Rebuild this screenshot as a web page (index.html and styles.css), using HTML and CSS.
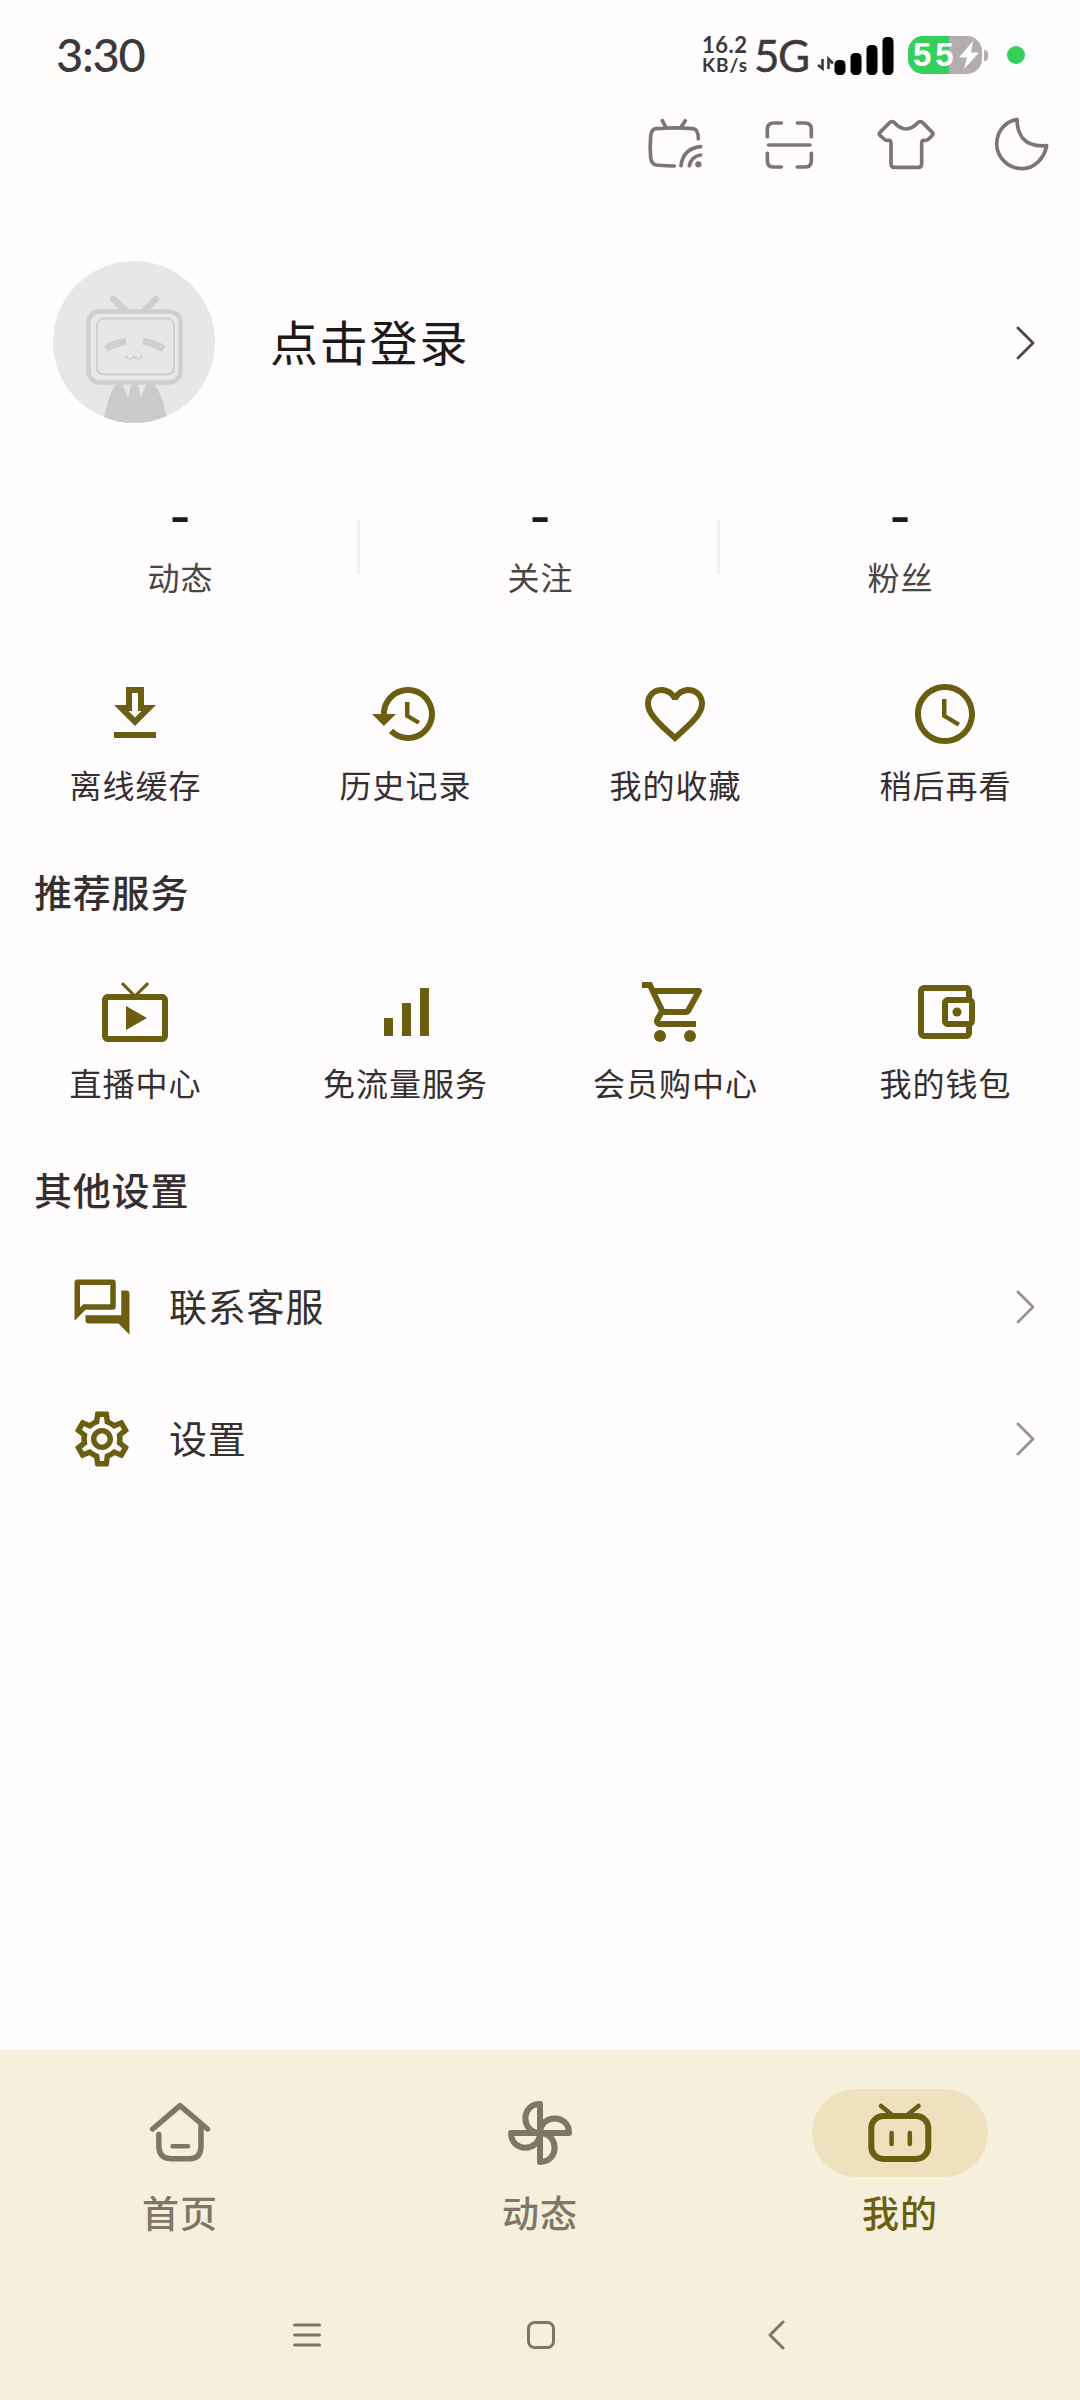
FILE: index.html
```html
<!DOCTYPE html>
<html lang="zh-CN">
<head>
<meta charset="utf-8">
<title>我的</title>
<link rel="stylesheet" href="styles.css">
</head>
<body>
<div class="screen">
  <header class="status">
    <span class="time">3:30</span>
    <div class="status-right">
      <div class="speed"><span class="speed-num">16.2</span><span class="speed-unit">KB/s</span></div>
      <span class="net">5G</span>
      <svg class="signal" width="78" height="40" viewBox="0 0 78 40">
        <g stroke="#3d393b" stroke-width="2.6" fill="none"><path d="M5.500 22V31.500L1 28M11.500 32V22L16 26.500"/></g>
        <rect x="17.500" y="23" width="11" height="15" rx="4.500"/>
        <rect x="33.500" y="16" width="11" height="22" rx="4.500"/>
        <rect x="49.500" y="8" width="11" height="30" rx="4.500"/>
        <rect x="65.500" y="0" width="11" height="38" rx="4.500"/>
      </svg>
      <div class="battery">
        <span class="battery-num">55</span>
        <svg width="20" height="28" viewBox="0 0 20 28"><path d="M14 0 0 16.500h8L5 28 20 11.500h-8z" fill="#fff"/></svg>
      </div>
      <span class="nub"></span>
      <span class="dot"></span>
    </div>
  </header>

  <div class="toolbar">
    <svg viewBox="0 0 180 180"><path d="M160 72Q160 44 145 41Q90 36 30 41Q18 45 17 65Q14 95 17 128Q20 148 34 150Q60 153 88 153M52 17L62 36M121 17L108 36M108 152Q115 100 167 95M133 152Q138 125 167 120"/><circle class="solid" cx="160" cy="148" r="9.500"/></svg>
    <svg viewBox="0 0 180 180"><path d="M22 65V43Q22 24 42 24H64M112 24H134Q154 24 154 43V65M22 115V137Q22 156 42 156H64M112 156H134Q154 156 154 137V115M26 90H150"/></svg>
    <svg viewBox="0 0 180 180"><path d="M54 22Q90 62 127 22Q134 17 140 23L169 52Q173 57 169 61L158 72Q152 78 144 76Q137 75 137 84V146Q137 157 126 157H56Q45 157 45 146V84Q45 75 38 76Q30 78 24 72L12 61Q8 57 12 52L41 23Q47 17 54 22Z"/></svg>
    <svg viewBox="0 0 180 180"><path d="M78 13Q78 45 93 67Q115 96 167 92C160 130 130 161 94 161A77 76 0 0 1 17 88C17 52 40 20 78 13Z"/></svg>
  </div>

  <section class="profile">
    <svg class="avatar" viewBox="0 0 162 162">
      <g fill="none" stroke="#cfcfcf" stroke-linecap="round" stroke-linejoin="round">
        <path fill="#cbcbcb" stroke="none" d="M51 162L51 156Q56 132 64 122H69L75 137L78.500 122H85L87.500 137L94 122H100Q109 132 113.600 156V162Z"/>
        <path stroke-width="6.500" d="M60 38L72 49M103 38L92 49"/>
        <rect x="35.500" y="50.500" width="92" height="71" rx="11" fill="#e7e7e7" stroke-width="4.500"/>
        <rect x="44" y="57.500" width="77" height="56" rx="7" stroke-width="2"/>
        <path stroke-width="7" stroke-linecap="butt" d="M53 88Q61 82 73 80.500M90 80.500Q102 82 111 88"/>
        <path stroke-width="1.700" d="M73 95Q77 101 81 95Q85 101 89 95"/>
      </g>
    </svg>
    <span class="name">点击登录</span>
    <svg class="chev dark" viewBox="0 0 20 36"><path d="M3 3L18 18L3 33"/></svg>
  </section>

  <section class="stats">
    <div class="stat"><b>-</b><span>动态</span></div>
    <div class="stat"><b>-</b><span>关注</span></div>
    <div class="stat"><b>-</b><span>粉丝</span></div>
  </section>

  <section class="grid">
    <div class="cell"><svg viewBox="0 0 24 24"><path d="M19 9h-4V3H9v6H5l7 7 7-7zm-8 2V5h2v6h1.170L12 13.170 9.830 11H11zm-6 7h14v2H5z"/></svg><span>离线缓存</span></div>
    <div class="cell"><svg viewBox="0 0 24 24"><path d="M13 3c-4.970 0-9 4.030-9 9H1l3.890 3.890.070.140L9 12H6c0-3.870 3.130-7 7-7s7 3.130 7 7-3.130 7-7 7c-1.930 0-3.680-.79-4.940-2.060l-1.420 1.420C8.270 19.990 10.510 21 13 21c4.970 0 9-4.030 9-9s-4.030-9-9-9zm-1 5v5l4.280 2.540.72-1.210-3.500-2.080V8H12z"/></svg><span>历史记录</span></div>
    <div class="cell"><svg viewBox="0 0 24 24"><path d="M16.500 3c-1.740 0-3.410.81-4.500 2.090C10.910 3.810 9.240 3 7.500 3 4.420 3 2 5.420 2 8.500c0 3.780 3.400 6.860 8.550 11.540L12 21.350l1.450-1.320C18.600 15.360 22 12.280 22 8.500 22 5.420 19.580 3 16.500 3zm-4.400 15.550l-.1.100-.1-.1C7.140 14.240 4 11.390 4 8.500 4 6.500 5.500 5 7.500 5c1.540 0 3.040.99 3.570 2.360h1.870C13.460 5.990 14.960 5 16.500 5c2 0 3.500 1.500 3.500 3.500 0 2.890-3.140 5.740-7.900 10.050z"/></svg><span>我的收藏</span></div>
    <div class="cell"><svg viewBox="0 0 24 24"><path d="M11.990 2C6.470 2 2 6.480 2 12s4.470 10 9.990 10C17.520 22 22 17.520 22 12S17.520 2 11.990 2zM12 20c-4.420 0-8-3.580-8-8s3.580-8 8-8 8 3.580 8 8-3.580 8-8 8zm.5-13H11v6l5.250 3.150.75-1.230-4.500-2.670z"/></svg><span>稍后再看</span></div>
  </section>

  <h2 class="title">推荐服务</h2>

  <section class="grid">
    <div class="cell"><svg viewBox="0 0 24 24"><path d="M21 6h-7.590l3.290-3.290L16 2l-4 4-4-4-.7.710L10.590 6H3c-1.100 0-2 .89-2 2v12c0 1.100.9 2 2 2h18c1.100 0 2-.9 2-2V8c0-1.110-.9-2-2-2zm0 14H3V8h18v12zM9 10v8l7-4z"/></svg><span>直播中心</span></div>
    <div class="cell"><svg viewBox="0 0 24 24"><path d="M5 14h3v6H5zM11 9h3v11h-3zM17 4h3v16h-3z"/></svg><span>免流量服务</span></div>
    <div class="cell"><svg viewBox="0 0 24 24"><path d="M15.550 13c.75 0 1.410-.41 1.750-1.030l3.580-6.490A.996.996 0 0 0 20.010 4H5.210l-.94-2H1v2h2l3.600 7.590-1.350 2.440C4.520 15.370 5.480 17 7 17h12v-2H7l1.100-2h7.450zM6.160 6h12.150l-2.760 5H8.530L6.160 6z"/><circle cx="7" cy="20" r="2"/><circle cx="17" cy="20" r="2"/></svg><span>会员购中心</span></div>
    <div class="cell"><svg viewBox="0 0 24 24"><path d="M21 7.280V5c0-1.100-.9-2-2-2H5a2 2 0 0 0-2 2v14a2 2 0 0 0 2 2h14c1.100 0 2-.9 2-2v-2.280A2 2 0 0 0 22 15V9a2 2 0 0 0-1-1.720zM20 9v6h-7V9h7zM5 19V5h14v2h-6c-1.100 0-2 .9-2 2v6c0 1.100.9 2 2 2h6v2H5z"/><circle cx="16" cy="12" r="1.500"/></svg><span>我的钱包</span></div>
  </section>

  <h2 class="title">其他设置</h2>

  <section class="list">
    <div class="row">
      <svg class="row-icon" viewBox="0 0 24 24"><path d="M15 4v7H5.170L4 12.170V4h11m1-2H3c-.55 0-1 .45-1 1v14l4-4h10c.55 0 1-.45 1-1V3c0-.55-.45-1-1-1zm5 4h-2v9H6v2c0 .55.450 1 1 1h11l4 4V7c0-.55-.45-1-1-1z"/></svg>
      <span>联系客服</span>
      <svg class="chev" viewBox="0 0 20 36"><path d="M3 3L18 18L3 33"/></svg>
    </div>
    <div class="row">
      <svg class="row-icon" viewBox="0 0 24 24"><path d="M19.430 12.980c.04-.32.070-.64.070-.98 0-.34-.03-.66-.07-.98l2.110-1.650c.19-.15.240-.42.120-.64l-2-3.460a.5.500 0 0 0-.61-.22l-2.490 1c-.52-.4-1.080-.73-1.690-.98l-.38-2.650A.488.488 0 0 0 14 2h-4c-.25 0-.46.180-.49.420l-.38 2.650c-.61.250-1.170.590-1.690.980l-2.490-1a.566.566 0 0 0-.18-.03c-.17 0-.34.090-.43.250l-2 3.460c-.13.220-.07.490.120.640l2.110 1.650c-.04.320-.07.650-.07.980 0 .33.030.660.070.980l-2.110 1.650c-.19.150-.24.420-.12.640l2 3.460a.5.500 0 0 0 .61.220l2.490-1c.52.400 1.080.730 1.690.980l.38 2.650c.03.240.240.420.490.420h4c.25 0 .46-.18.490-.42l.38-2.650c.61-.25 1.170-.59 1.690-.98l2.490 1c.06.020.120.030.180.030.17 0 .34-.09.430-.25l2-3.460c.12-.22.070-.49-.12-.64l-2.110-1.650zm-1.980-1.710c.04.310.050.520.050.730 0 .21-.02.430-.05.730l-.14 1.130.89.700 1.080.840-.7 1.210-1.270-.51-1.040-.42-.9.680c-.43.320-.84.560-1.250.730l-1.060.430-.16 1.130-.2 1.350h-1.400l-.19-1.350-.16-1.130-1.060-.43c-.43-.18-.83-.41-1.230-.71l-.91-.7-1.060.430-1.270.510-.7-1.210 1.080-.84.890-.7-.14-1.130c-.03-.31-.05-.54-.05-.74s.02-.43.050-.73l.14-1.130-.89-.7-1.080-.84.700-1.210 1.270.510 1.040.420.900-.68c.43-.32.840-.56 1.250-.73l1.060-.43.160-1.130.200-1.350h1.390l.19 1.350.160 1.130 1.060.430c.43.180.830.410 1.230.710l.91.700 1.060-.43 1.270-.51.700 1.210-1.070.850-.89.700.140 1.130zM12 8c-2.210 0-4 1.790-4 4s1.790 4 4 4 4-1.790 4-4-1.790-4-4-4zm0 6c-1.100 0-2-.9-2-2s.9-2 2-2 2 .9 2 2-.9 2-2 2z"/></svg>
      <span>设置</span>
      <svg class="chev" viewBox="0 0 20 36"><path d="M3 3L18 18L3 33"/></svg>
    </div>
  </section>

  <nav class="tabs">
    <div class="tab">
      <div class="pill"><svg viewBox="0 0 66 66"><path stroke-width="5.500" d="M5.700 29L33 5.700L60.500 29M11.800 34.500V46.700Q12.500 58.700 24 58.700H43Q53.500 58.700 54 46.700V25"/><path stroke-width="4.500" d="M25.500 46.300H41"/></svg></div>
      <span>首页</span>
    </div>
    <div class="tab">
      <div class="pill"><svg viewBox="0 0 66 66"><g stroke-width="6"><path d="M33 33V4C13.500 4 13.500 32.500 33 33"/><path d="M33 33V4C13.500 4 13.500 32.500 33 33" transform="rotate(90 33 33)"/><path d="M33 33V4C13.500 4 13.500 32.500 33 33" transform="rotate(180 33 33)"/><path d="M33 33V4C13.500 4 13.500 32.500 33 33" transform="rotate(270 33 33)"/></g></svg></div>
      <span>动态</span>
    </div>
    <div class="tab active">
      <div class="pill"><svg viewBox="0 0 66 66"><rect x="4.300" y="16" width="57" height="43" rx="12" stroke-width="6"/><path stroke-width="4.500" d="M14 6L24 14M51.500 6L41.500 14M24.600 33V44M42.800 33V44"/></svg></div>
      <span>我的</span>
    </div>
  </nav>
  <div class="sysnav">
    <svg viewBox="0 0 30 30"><path d="M2.500 5H27.500M2.500 15H27.500M2.500 25H27.500"/></svg>
    <svg viewBox="0 0 30 30"><rect x="1.500" y="2.500" width="25" height="25" rx="6"/></svg>
    <svg viewBox="0 0 30 30"><path d="M22 2L9 15L22 28"/></svg>
  </div>
</div>
</body>
</html>
```
FILE: styles.css
```css
* { box-sizing: border-box; margin: 0; }
body { margin: 0; }
svg { display: block; flex: none; }

.screen {
  width: 1080px;
  height: 2400px;
  display: flex;
  flex-direction: column;
  background: #fffcfe;
  color: #35302f;
  font-family: "Noto Sans CJK SC", sans-serif;
  overflow: hidden;
}

.status {
  height: 110px;
  padding: 0 55px 0 56px;
  display: flex;
  justify-content: space-between;
  align-items: center;
  font-family: Lato, sans-serif;
  color: #3d393b;
}
.time { padding-bottom: 2px; font-size: 47px; letter-spacing: -1.3px; font-weight: 500; line-height: 56px; }
.status-right { display: flex; align-items: center; height: 110px; }
.speed { display: flex; flex-direction: column; width: 52px; font-weight: 700; }
.speed-num { font-size: 22px; line-height: 20px; letter-spacing: .5px; }
.speed-unit { font-size: 19px; line-height: 20px; letter-spacing: 1px; }
.net { width: 63px; padding-bottom: 1px; font-size: 44px; line-height: 56px; letter-spacing: -1.5px; -webkit-text-stroke: .4px; }
.signal { margin: 4px 13px 0 0; }
.battery {
  width: 74px;
  height: 38px;
  padding: 0 3px 0 5px;
  border-radius: 15px;
  display: flex;
  align-items: center;
  justify-content: space-between;
  background: linear-gradient(90deg, #34cf5c 41px, #b2adaf 41px);
}
.battery-num { color: #fff; font-size: 33px; line-height: 38px; font-weight: 700; font-family: "Liberation Sans", sans-serif; letter-spacing: 4px; }
.battery svg { margin-left: -4px; }
.nub { width: 4px; height: 11px; margin: 0 19px 0 2px; border-radius: 0 4px 4px 0; background: #b2adaf; }
.dot { width: 18px; height: 18px; border-radius: 50%; background: #34cf5c; }

.toolbar {
  height: 70px;
  padding: 5px 29px 0 645px;
  display: flex;
  justify-content: space-between;
}
.toolbar svg { width: 60px; height: 60px; fill: none; stroke: #7c7672; stroke-width: 11; stroke-linecap: round; stroke-linejoin: round; }
.toolbar .solid { fill: #7c7672; stroke: none; }

.profile {
  height: 324px;
  padding: 0 45px 0 53px;
  display: flex;
  align-items: center;
}
.avatar { width: 162px; height: 162px; border-radius: 50%; background: #e7e7e7; }
.name { flex: 1; margin-left: 55px; padding-bottom: 5px; font-size: 48px; letter-spacing: 1.8px; line-height: 70px; color: #1d1919; }
.chev { width: 20px; height: 36px; fill: none; stroke: #98928c; stroke-width: 2.8; stroke-linecap: round; stroke-linejoin: round; }
.chev.dark { margin-top: 2px; stroke: #4b4642; }

.stats { height: 138px; display: flex; }
.stat {
  flex: 1;
  display: flex;
  flex-direction: column;
  align-items: center;
  background: linear-gradient(#f3f0e4, #f3f0e4) right 0 top 16px / 3px 54px no-repeat;
}
.stat:last-child { background: none; }
.stat b { font: 400 62px/22px "Liberation Sans", sans-serif; height: 49px; color: #1d1919; }
.stat span { padding-left: 1px; font-size: 32px; line-height: 46px; letter-spacing: 1px; color: #494540; }

.grid { height: 216px; display: grid; grid-template-columns: repeat(4, 1fr); padding-top: 36px; }
.cell { display: flex; flex-direction: column; align-items: center; }
.cell svg { width: 72px; height: 72px; fill: #6b5e10; }
.cell span { margin-top: 10px; padding-left: 1px; font-size: 32px; line-height: 48px; letter-spacing: 1px; }

.title { height: 82px; padding: 5px 0 0 34px; font-size: 38px; font-weight: 500; line-height: 56px; letter-spacing: .8px; }

.list { display: flex; flex-direction: column; padding-top: 3px; }
.row { height: 132px; padding: 0 45px 0 69px; display: flex; align-items: center; }
.row-icon { width: 66px; height: 66px; fill: #6b5e10; }
.row span { flex: 1; margin-left: 34px; padding-bottom: 5px; font-size: 38px; line-height: 56px; letter-spacing: .8px; }

.tabs {
  margin-top: auto;
  height: 220px;
  padding-top: 39px;
  display: flex;
  background: #f6efdc;
}
.tab { flex: 1; display: flex; flex-direction: column; align-items: center; color: #7f7668; }
.pill { width: 176px; height: 88px; border-radius: 44px; display: flex; align-items: center; justify-content: center; }
.pill svg { width: 66px; height: 66px; fill: none; stroke: currentColor; stroke-linecap: round; stroke-linejoin: round; }
.tab span { margin-top: 7px; font-size: 37px; line-height: 56px; font-weight: 500; letter-spacing: 1px; }
.tab.active { color: #6b5e10; }
.tab.active .pill { background: #eee1bd; }
.sysnav {
  height: 130px;
  padding: 0 289px 0 292px;
  display: flex;
  align-items: center;
  justify-content: space-between;
  background: #f6efdc;
}
.sysnav svg { width: 30px; height: 30px; fill: none; stroke: #7f7668; stroke-width: 3; stroke-linecap: round; stroke-linejoin: round; }
```
